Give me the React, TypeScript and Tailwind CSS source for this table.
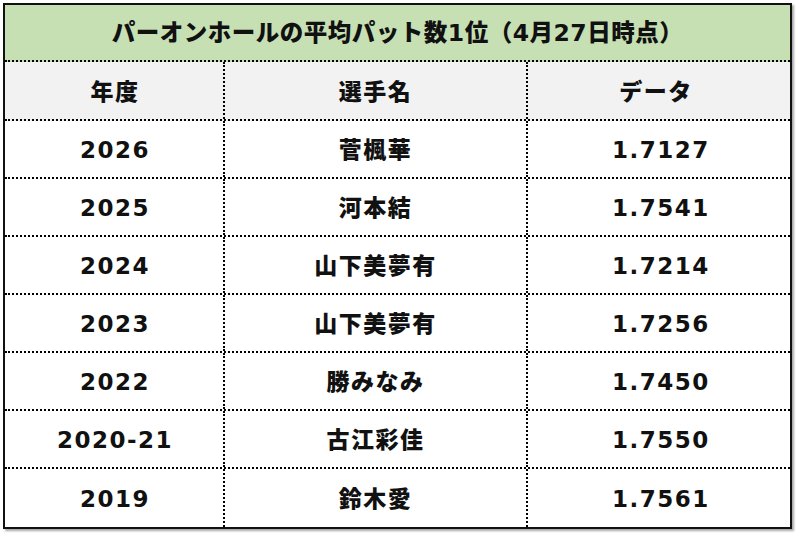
const rows = [
  { year: "2026", name: "菅楓華", data: "1.7127" },
  { year: "2025", name: "河本結", data: "1.7541" },
  { year: "2024", name: "山下美夢有", data: "1.7214" },
  { year: "2023", name: "山下美夢有", data: "1.7256" },
  { year: "2022", name: "勝みなみ", data: "1.7450" },
  { year: "2020-21", name: "古江彩佳", data: "1.7550" },
  { year: "2019", name: "鈴木愛", data: "1.7561" },
];

const font = { fontFamily: '"DejaVu Sans", "Noto Sans CJK JP", sans-serif' };

function Row({ a, b, c, header, last }: { a: string; b: string; c: string; header?: boolean; last?: boolean }) {
  const line = last ? "" : "border-b-2 border-dotted border-black";
  const bg = header ? "bg-[#f2f2f2]" : "bg-white";
  return (
    <div className={`grid grid-cols-[220px_303px_1fr] ${header ? "h-[59px]" : "h-[58px]"} ${line} ${bg}`}>
      <div className="flex items-center justify-center border-r-2 border-dotted border-black pl-[2px] pt-[3px]">{a}</div>
      <div className="flex items-center justify-center border-r-2 border-dotted border-black pt-[3px]">{b}</div>
      <div className={`flex items-center justify-center pt-[3px] ${header ? "pr-[6px]" : "pl-[4px]"}`}>{c}</div>
    </div>
  );
}

export default function App() {
  return (
    <div className="w-[800px] h-[533px] bg-white p-[3px]" style={font}>
      <div className="w-[789px] border-2 border-[#111] shadow-[2px_2px_2px_rgba(0,0,0,0.35)] text-[#111] font-black text-[23px] tracking-[1.5px]">
        <div className="h-[57px] flex items-center justify-center bg-[#c6e0b4] border-b-2 border-dotted border-black text-[23.5px] tracking-[0.5px] pt-[2px]">
          パーオンホールの平均パット数1位（4月27日時点）
        </div>
        <Row a="年度" b="選手名" c="データ" header />
        {rows.map((r, i) => (
          <Row key={r.year} a={r.year} b={r.name} c={r.data} last={i === rows.length - 1} />
        ))}
      </div>
    </div>
  );
}
